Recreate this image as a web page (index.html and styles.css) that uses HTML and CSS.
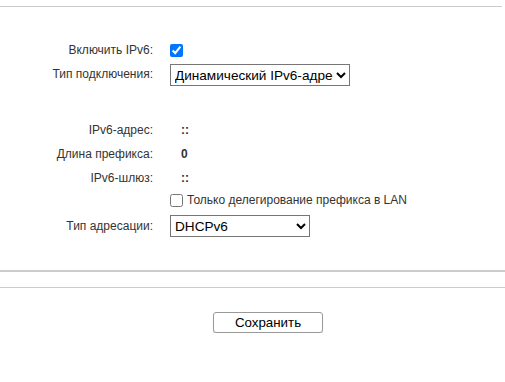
FILE: index.html
```html
<!DOCTYPE html>
<html lang="ru">
<head>
<meta charset="utf-8">
<link rel="stylesheet" href="styles.css">
</head>
<body>
<div class="topline"></div>
<div class="form">
  <div class="row">
    <div class="label">Включить IPv6:</div>
    <div class="value"><input type="checkbox" class="cb" checked></div>
  </div>
  <div class="row">
    <div class="label">Тип подключения:</div>
    <div class="value value-low">
      <select class="sel sel-wide"><option>Динамический IPv6-адрес</option></select>
    </div>
  </div>
  <div class="spacer"></div>
  <div class="row">
    <div class="label">IPv6-адрес:</div>
    <div class="value strong">::</div>
  </div>
  <div class="row">
    <div class="label">Длина префикса:</div>
    <div class="value strong">0</div>
  </div>
  <div class="row">
    <div class="label">IPv6-шлюз:</div>
    <div class="value strong">::</div>
  </div>
  <div class="row row-check">
    <div class="label"></div>
    <div class="value"><label class="check"><input type="checkbox" class="cb">Только делегирование префикса в LAN</label></div>
  </div>
  <div class="row row-addr">
    <div class="label">Тип адресации:</div>
    <div class="value">
      <select class="sel sel-narrow"><option>DHCPv6</option></select>
    </div>
  </div>
</div>
<div class="thickline"></div>
<div class="thinline"></div>
<div class="actions">
  <button class="btn" type="button">Сохранить</button>
</div>
</body>
</html>
```
FILE: styles.css
```css
html, body {
  margin: 0;
  padding: 0;
  background: #fff;
}
body {
  font-family: "Liberation Sans", Arial, sans-serif;
  font-size: 12px;
  color: #333;
}
.topline {
  margin-top: 6px;
  margin-right: 3px;
  border-top: 1px solid #ccc;
}
.form {
  padding-top: 31px;
  padding-bottom: 32px;
}
.row {
  display: grid;
  grid-template-columns: 153px 1fr;
  column-gap: 17px;
  align-items: center;
  min-height: 24px;
}
.row-check {
  margin-top: -2px;
}
.row-addr {
  margin-top: 2px;
}
.label {
  text-align: right;
  color: #333;
}
.value {
  display: flex;
  align-items: center;
}
.value-low {
  align-self: end;
}
.strong {
  font-weight: bold;
  padding-left: 11px;
  color: #333;
}
.spacer {
  height: 32px;
}
.cb {
  margin: 0;
  width: 13px;
  height: 13px;
}
.check {
  display: flex;
  align-items: center;
  gap: 4px;
  font-size: 12px;
  color: #333;
}
.sel {
  font-family: "Liberation Sans", Arial, sans-serif;
  font-size: 13.6px;
  color: #000;
  height: 22px;
  border: 1px solid #767676;
  border-radius: 0;
  background: #fff;
  padding: 0;
  margin: 0;
}
.sel-wide { width: 180px; }
.sel-narrow { width: 140px; }
.thickline {
  border-top: 2px solid #ccc;
}
.thinline {
  margin-top: 15px;
  border-top: 1px solid #ccc;
}
.actions {
  display: flex;
  padding-top: 24px;
  padding-left: 213px;
}
.btn {
  width: 110px;
  height: 21px;
  font-family: "Liberation Sans", Arial, sans-serif;
  font-size: 13.33px;
  color: #000;
  background: #fff;
  border: 1px solid #999;
  border-radius: 3px;
  box-shadow: 0 1px 1px rgba(0,0,0,0.15);
  padding: 0;
}
```
